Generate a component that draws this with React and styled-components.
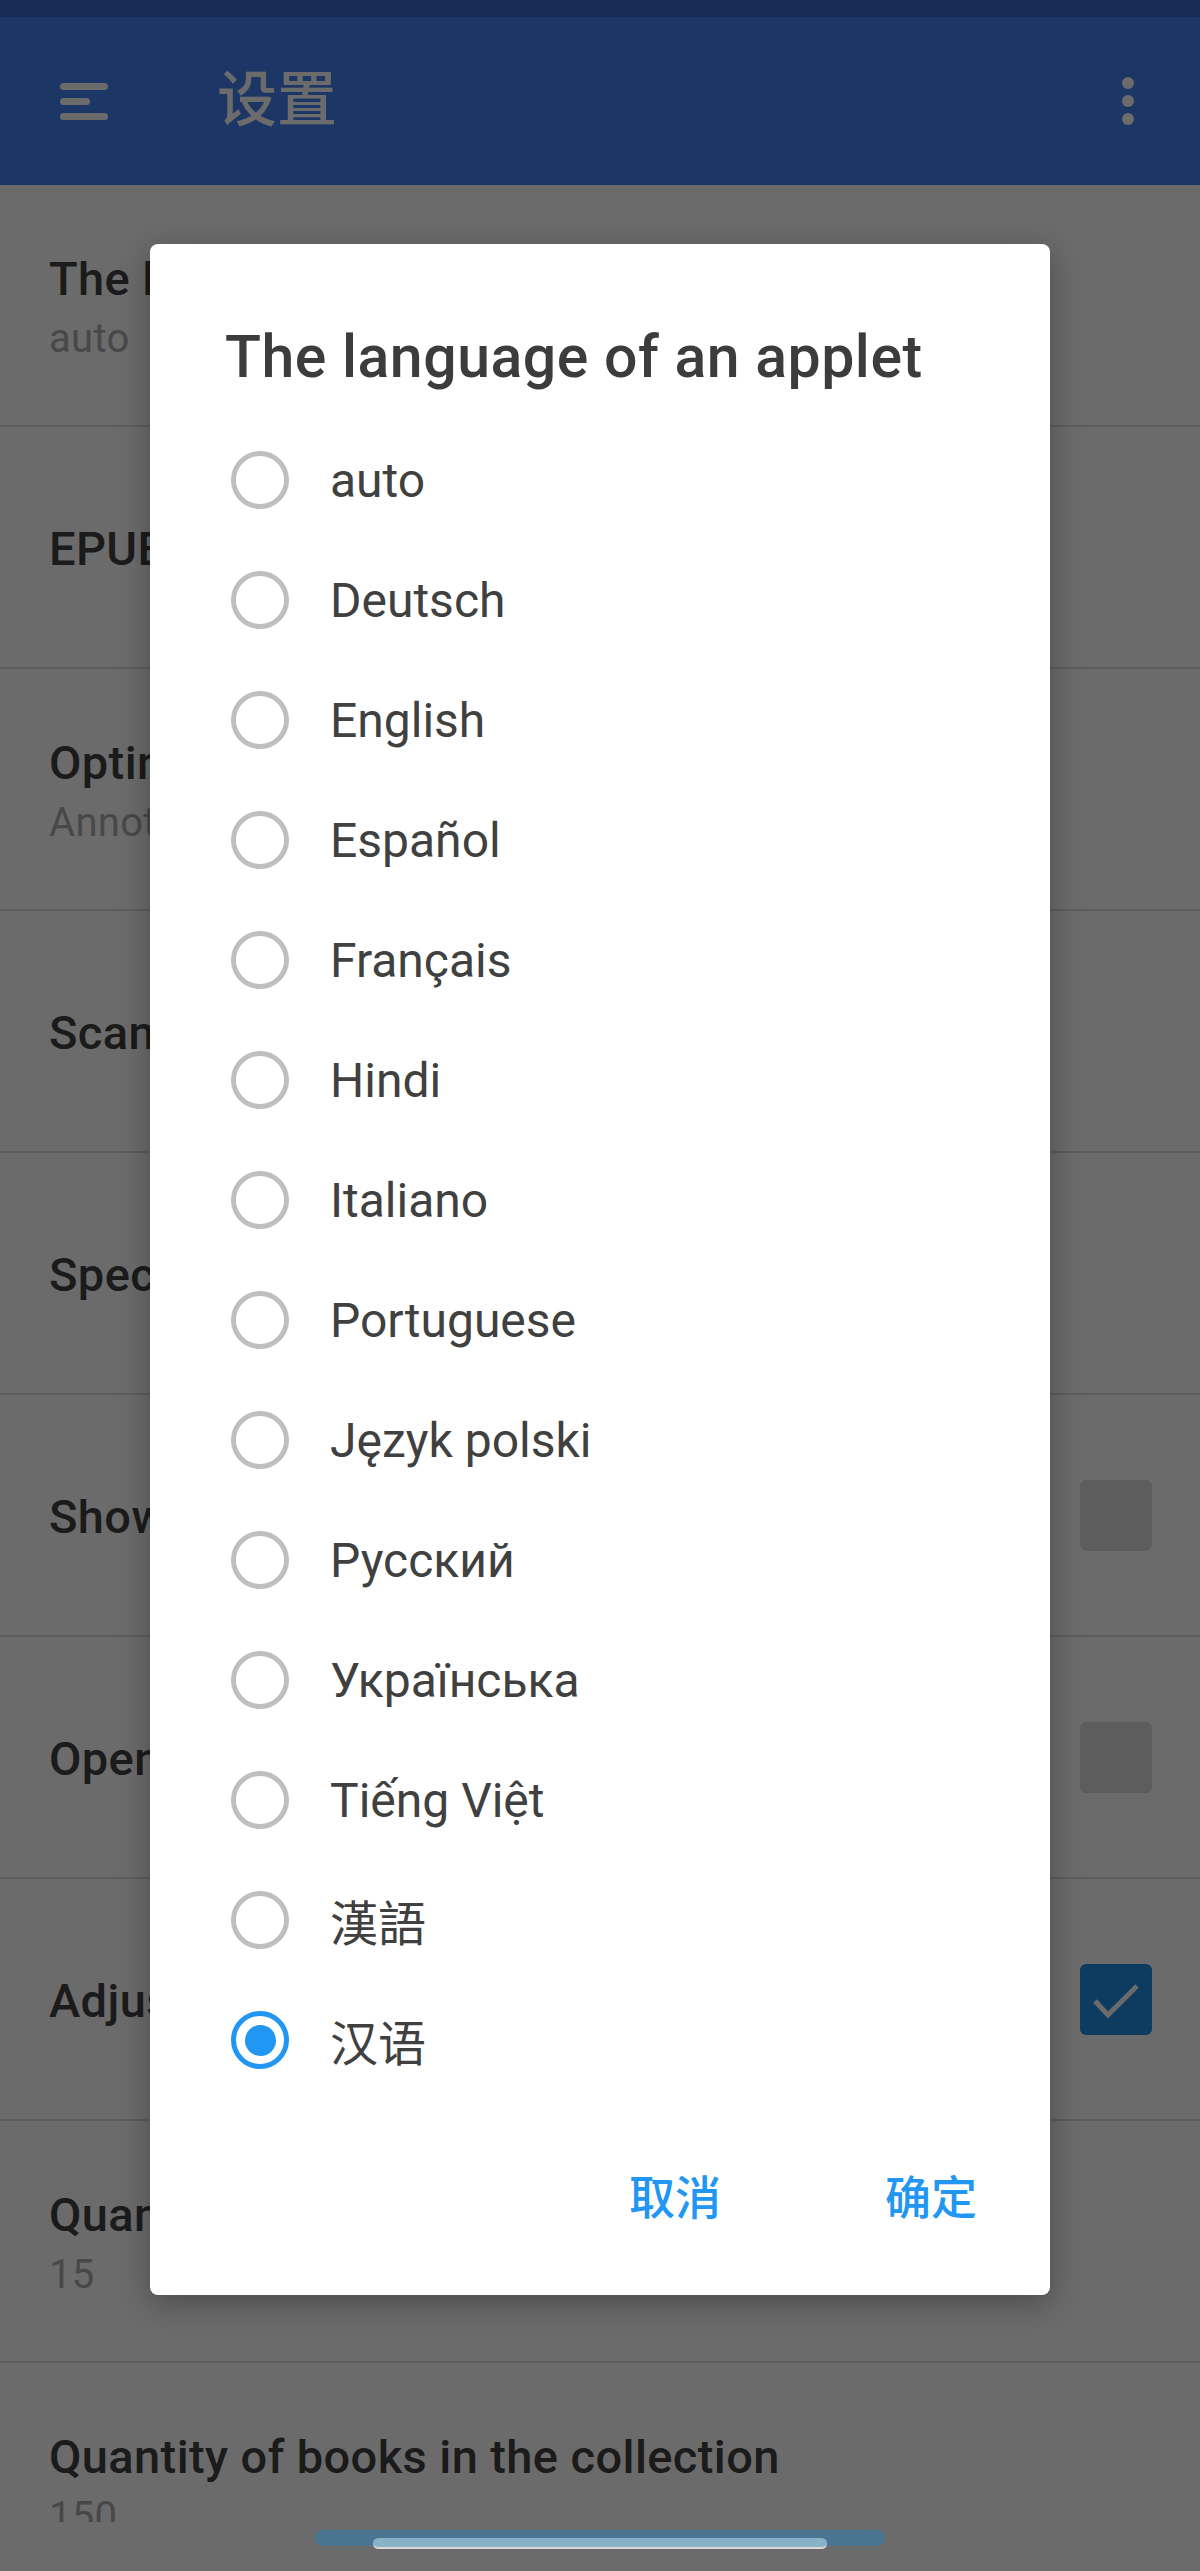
import React from "react";
import styled, { createGlobalStyle } from "styled-components";

const GlobalStyle = createGlobalStyle`
    html, body {
        margin: 0;
        padding: 0;
    }
    body {
        font-family: Roboto, "Noto Sans CJK SC", sans-serif;
        background: #fff;
    }
`

const Screen = styled.div`
    position: relative;
    width: 1200px;
    height: 2571px;
    overflow: hidden;
    background: #fff;
    display: flex;
    flex-direction: column;
`

const StatusBar = styled.div`
    height: 17px;
    flex-shrink: 0;
    background: #3866c8;
`

const Toolbar = styled.header`
    height: 168px;
    flex-shrink: 0;
    background: #4481f0;
    display: flex;
    align-items: center;
    padding: 0 60px 0 60px;
    color: #fff;
`

const MenuIcon = styled.div`
    width: 48px;
    display: flex;
    flex-direction: column;
    gap: 8px;
    margin-right: 109px;
`

const MenuBar = styled.span`
    display: block;
    height: 7px;
    border-radius: 4px;
    background: #fff;
    width: ${p => p.$short ? "30px" : "48px"};
`

const ToolbarTitle = styled.h1`
    flex: 1;
    margin: 0;
    font-family: Roboto, "Noto Sans CJK SC", sans-serif;
    font-size: 60px;
    line-height: 1;
    font-weight: 500;
    color: #fff;
`

const MoreIcon = styled.div`
    display: flex;
    flex-direction: column;
    gap: 6px;
    margin-right: 6px;
`

const Dot = styled.span`
    width: 12px;
    height: 12px;
    border-radius: 50%;
    background: #fff;
`

const SettingsList = styled.div`
    height: 2337px;
    flex-shrink: 0;
    overflow: hidden;
`

const Row = styled.div`
    min-height: 240px;
    border-bottom: 2px solid #dbdbdb;
    display: flex;
    align-items: center;
    justify-content: space-between;
    padding: 0 48px 0 49px;
`

const RowText = styled.div`
    display: flex;
    flex-direction: column;
    padding-top: ${p => p.$two ? "6px" : "4px"};
    white-space: nowrap;
`

const RowTitle = styled.div`
    font-size: 47px;
    line-height: 60px;
    letter-spacing: 0.4px;
    font-weight: 500;
    color: #424242;
`

const RowSummary = styled.div`
    font-size: 40px;
    line-height: 59px;
    letter-spacing: 0.3px;
    color: #adadad;
`

const Checkbox = styled.div`
    width: 72px;
    height: 71px;
    border-radius: 6px;
    flex-shrink: 0;
    background: ${p => p.$checked ? "#228de5" : "#dedede"};
    display: flex;
    align-items: center;
    justify-content: center;
`

const NavArea = styled.div`
    flex: 1;
    background: #fff;
`

const Scrim = styled.div`
    position: absolute;
    inset: 0;
    background: rgba(0, 0, 0, 0.58);
    display: flex;
    justify-content: center;
    align-items: flex-start;
    padding-top: 244px;
`

const Dialog = styled.div`
    width: 900px;
    background: #fff;
    border-radius: 8px;
    box-shadow: 0 8px 30px rgba(0, 0, 0, 0.3);
    display: flex;
    flex-direction: column;
`

const DialogTitle = styled.h2`
    margin: 0;
    padding: 78.5px 75px 29.5px;
    font-size: 59px;
    line-height: 68px;
    letter-spacing: 0.5px;
    font-weight: 500;
    color: #3c3c3c;
`

const Options = styled.ul`
    list-style: none;
    margin: 0;
    padding: 0;
`

const Option = styled.li`
    height: 120px;
    display: flex;
    align-items: center;
    padding-left: 81px;
    gap: 41px;
    font-size: 48px;
    color: #404040;
    font-family: Roboto, "Noto Sans CJK SC", sans-serif;
`

const Radio = styled.span`
    width: 58px;
    height: 58px;
    box-sizing: border-box;
    border-radius: 50%;
    border: 5.5px solid ${p => p.$on ? "#2196f3" : "#bfbfbf"};
    display: flex;
    align-items: center;
    justify-content: center;
    flex-shrink: 0;

    &::after {
        content: "";
        width: 31px;
        height: 31px;
        border-radius: 50%;
        background: ${p => p.$on ? "#2196f3" : "transparent"};
    }
`

const Buttons = styled.div`
    height: 195px;
    display: flex;
    align-items: center;
    justify-content: flex-end;
    gap: 164px;
    padding-right: 73px;
`

const TextButton = styled.button`
    border: none;
    background: none;
    padding: 0;
    font-family: Roboto, "Noto Sans CJK SC", sans-serif;
    font-size: 46px;
    line-height: 1;
    font-weight: 500;
    color: #2196f3;
`

const NavTrack = styled.div`
    position: absolute;
    left: 315px;
    top: 2530px;
    width: 570px;
    height: 16px;
    border-radius: 8px;
    background: #4a7590;
`

const NavThumb = styled.div`
    position: absolute;
    left: 58px;
    top: 8px;
    width: 454px;
    height: 11px;
    border-radius: 6px;
    background: #87b2c8;
    border-bottom: 2px solid #d8d8d8;
    box-sizing: border-box;
`

const settings = [
    { title: "The language of an applet", summary: "auto" },
    { title: "EPUB settings" },
    { title: "Optimization", summary: "Annotations" },
    { title: "Scan folders" },
    { title: "Special settings" },
    { title: "Show hidden files", check: false },
    { title: "Open last book", check: false },
    { title: "Adjust brightness", check: true },
    { title: "Quantity of recent books", summary: "15" },
    { title: "Quantity of books in the collection", summary: "150" },
];

const languages = [
    "auto", "Deutsch", "English", "Español", "Français", "Hindi", "Italiano",
    "Portuguese", "Język polski", "Русский", "Українська", "Tiếng Việt", "漢語", "汉语",
];

const CheckMark = () => (
    <svg width="72" height="71" viewBox="0 0 72 71">
        <path d="M15 37 L28 51 L57 22" fill="none" stroke="#fff" strokeWidth="5" />
    </svg>
)

const App = () => {
    const selected = 13;

    return (
        <>
            <GlobalStyle />
            <Screen>
                <StatusBar />
                <Toolbar>
                    <MenuIcon>
                        <MenuBar />
                        <MenuBar $short />
                        <MenuBar />
                    </MenuIcon>
                    <ToolbarTitle>设置</ToolbarTitle>
                    <MoreIcon>
                        <Dot />
                        <Dot />
                        <Dot />
                    </MoreIcon>
                </Toolbar>
                <SettingsList>
                    {settings.map((s, i) => (
                        <Row key={i}>
                            <RowText $two={!!s.summary}>
                                <RowTitle>{s.title}</RowTitle>
                                {s.summary && <RowSummary>{s.summary}</RowSummary>}
                            </RowText>
                            {s.check !== undefined && (
                                <Checkbox $checked={s.check}>{s.check && <CheckMark />}</Checkbox>
                            )}
                        </Row>
                    ))}
                </SettingsList>
                <NavArea />
                <Scrim>
                    <Dialog>
                        <DialogTitle>The language of an applet</DialogTitle>
                        <Options>
                            {languages.map((lang, i) => (
                                <Option key={lang}>
                                    <Radio $on={i === selected} />
                                    {lang}
                                </Option>
                            ))}
                        </Options>
                        <Buttons>
                            <TextButton>取消</TextButton>
                            <TextButton>确定</TextButton>
                        </Buttons>
                    </Dialog>
                </Scrim>
                <NavTrack>
                    <NavThumb />
                </NavTrack>
            </Screen>
        </>
    )
}

export default App;
